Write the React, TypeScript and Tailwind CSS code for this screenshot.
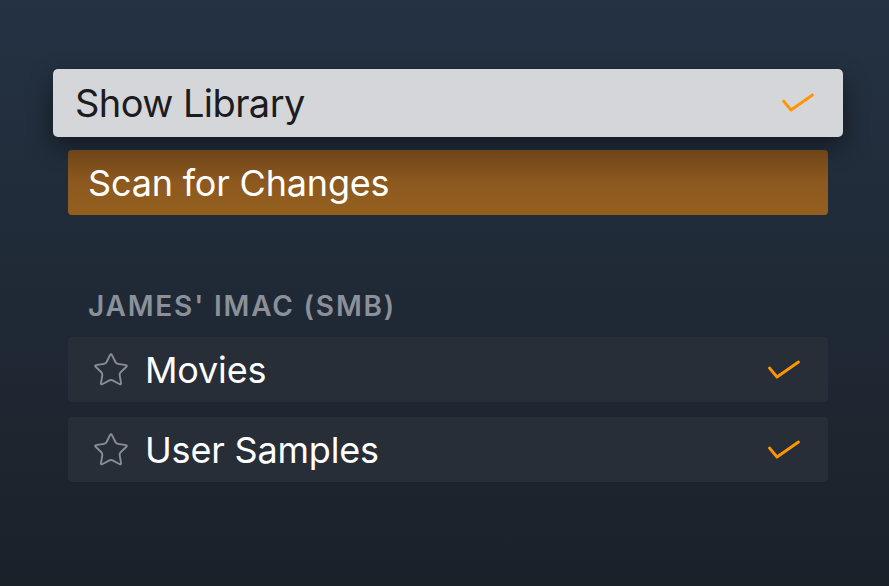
import { Star } from "lucide-react";

function Check({ className }: { className?: string }) {
    return (
        <svg viewBox="0 0 32 20" className={className} fill="none">
            <polyline
                points="1.5,8 9,17 30.5,2"
                stroke="#ff9500"
                strokeWidth="2.8"
                strokeLinecap="round"
                strokeLinejoin="round"
            />
        </svg>
    );
}

const sources = ["Movies", "User Samples"];

export default function App() {
    return (
        <div
            className="flex h-[586px] w-[889px] flex-col bg-gradient-to-b from-[#243243] to-[#1b2129] pt-[69px]"
            style={{ fontFamily: "Inter, 'Noto Sans', sans-serif" }}
        >
            {/* Focused item */}
            <div className="ml-[53px] mr-[46px] flex h-[68px] items-center justify-between rounded-[5px] bg-[#d5d6d9] pl-[22px] pr-[29px] shadow-[0_10px_24px_rgba(0,0,0,0.45)]">
                <span className="text-[38px] tracking-[-0.015em] text-[#1c1c1e]">Show Library</span>
                <Check className="h-[20px] w-[32px]" />
            </div>

            <div className="ml-[68px] mr-[61px] mt-[13px] flex h-[65px] items-center rounded-[4px] bg-gradient-to-b from-[#6e4519] via-[#8d591f] to-[#93601f] pl-[20px]">
                <span className="text-[36px] tracking-[-0.005em] text-white">Scan for Changes</span>
            </div>

            {/* Server section */}
            <div className="ml-[68px] mr-[61px] mt-[74px] pl-[20px] text-[28px] font-semibold leading-[34px] tracking-[0.065em] text-[#8b9099]">
                JAMES' IMAC (SMB)
            </div>

            <div className="ml-[68px] mr-[61px] mt-[14px] flex flex-col gap-[15px]">
                {sources.map((s) => (
                    <div
                        key={s}
                        className="flex h-[65px] items-center rounded-[4px] bg-[#272e38] pl-[24px] pr-[28px]"
                    >
                        <Star className="h-[38px] w-[38px] text-[#8a8d92]" strokeWidth={1.2} />
                        <span className="ml-[15px] flex-1 text-[36px] tracking-[-0.005em] text-white">{s}</span>
                        <Check className="h-[20px] w-[32px]" />
                    </div>
                ))}
            </div>
        </div>
    );
}
